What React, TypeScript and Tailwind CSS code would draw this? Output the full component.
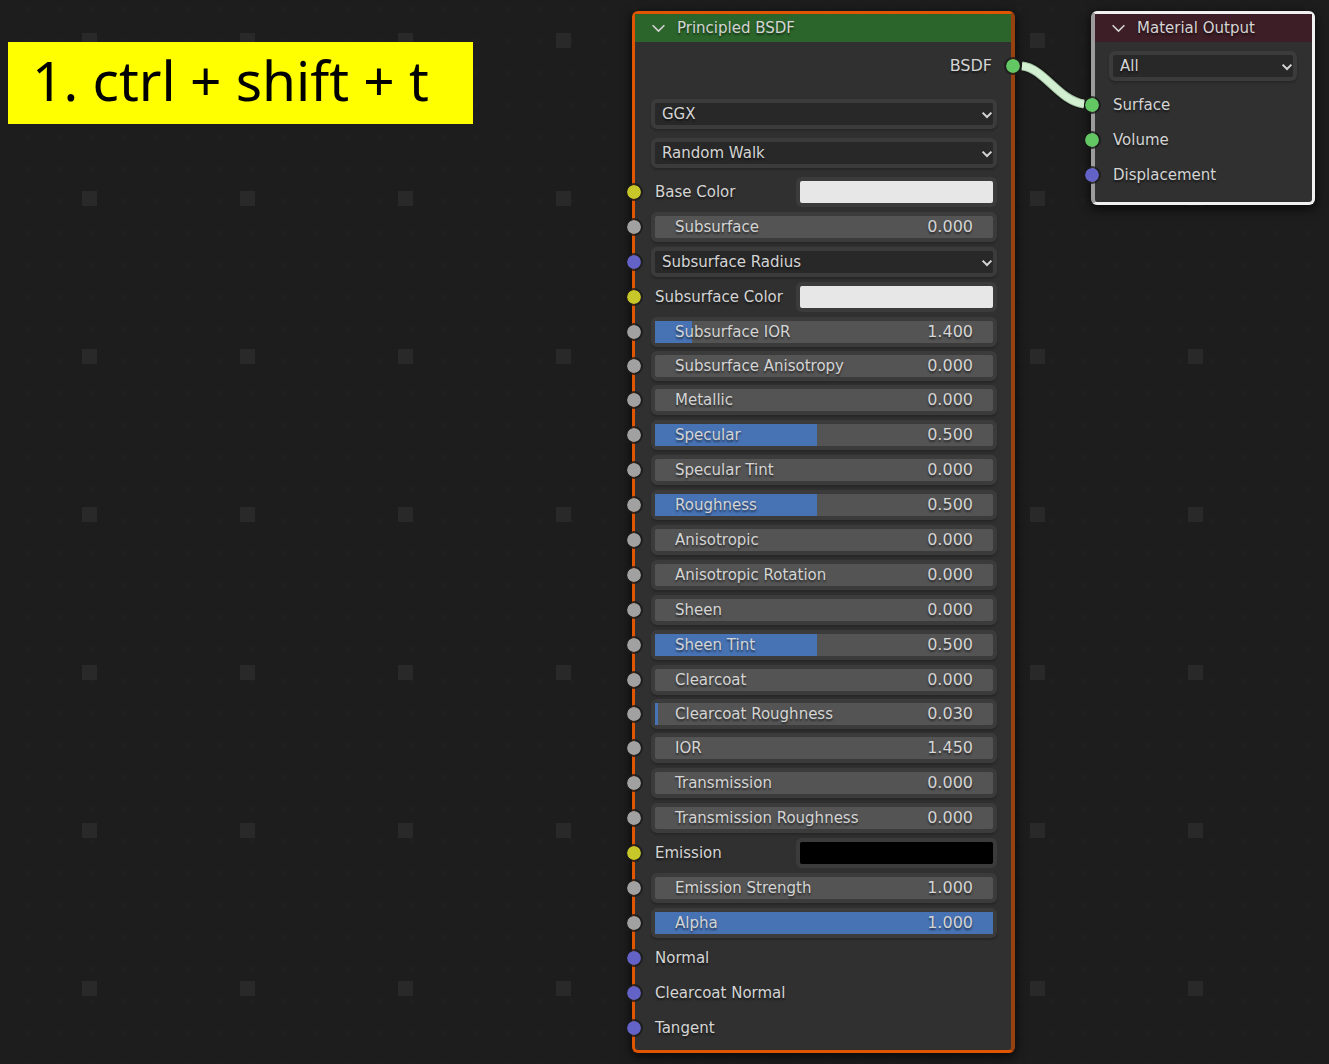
import { useState, type ReactNode } from "react";

type SocketKind = "color" | "value" | "vector" | "shader";

const socketColors: Record<SocketKind, string> = {
  color: "bg-[#c7c729]",
  value: "bg-[#a1a1a1]",
  vector: "bg-[#6363c7]",
  shader: "bg-[#63c763]",
};

const socketSides = {
  left: "-left-[8px]",
  right: "-right-[9px]",
  outer: "-left-[10px]",
};

type SocketSide = keyof typeof socketSides;

function Socket({ kind, side = "left" }: { kind: SocketKind; side?: SocketSide }) {
  return (
    <span
      className={`absolute top-1/2 size-[14px] -translate-y-1/2 rounded-full outline-2 outline-[#1a1a1a]/80 ${socketSides[side]} ${socketColors[kind]}`}
    />
  );
}

function Chevron({ className }: { className: string }) {
  return (
    <svg viewBox="0 0 14 10" className={className} fill="none" stroke="currentColor" aria-hidden="true">
      <path d="M1.5 2 7 7.5 12.5 2" />
    </svg>
  );
}

function NodeHeader({ title, className }: { title: string; className: string }) {
  return (
    <header className={`flex h-7 items-center gap-[11px] px-4 ${className}`}>
      <button type="button" aria-label={`Collapse ${title}`} className="flex">
        <Chevron className="h-[11px] w-[15px] stroke-[1.5]" />
      </button>
      <h2>{title}</h2>
    </header>
  );
}

function Row({
  kind,
  side,
  tight = false,
  children,
}: {
  kind: SocketKind;
  side?: SocketSide;
  tight?: boolean;
  children: ReactNode;
}) {
  return (
    <div className={`relative flex items-center pl-4 pr-[14px] ${tight ? "h-[33px]" : "h-[35px]"}`}>
      <Socket kind={kind} side={side} />
      {children}
    </div>
  );
}

function Dropdown({ label, options }: { label: string; options: string[] }) {
  return (
    <div className="relative h-[30px] w-full">
      <select
        aria-label={label}
        className="size-full appearance-none rounded-md border-4 border-[#3b3b3b] bg-[#282828] pl-[7px] pr-6 shadow-[0_2px_2px_#0003] [text-shadow:inherit]"
      >
        {options.map((o) => (
          <option key={o}>{o}</option>
        ))}
      </select>
      <Chevron className="pointer-events-none absolute right-1 top-3 h-[8px] w-[12px] stroke-[2.5]" />
    </div>
  );
}

function Slider({ label, value, fill, max = 1 }: { label: string; value: number; fill: number; max?: number }) {
  const [current, setCurrent] = useState(value);
  const width = current === value ? fill : (current / max) * 100;
  return (
    <label className="relative flex h-[30px] w-full items-center justify-between rounded-md border-4 border-[#3b3b3b] bg-[#545454] px-5 shadow-[0_2px_2px_#0003]">
      <span className="absolute inset-y-0 left-0 bg-[#4772b3]" style={{ width: `${width}%` }} />
      <span className="relative">{label}</span>
      <span className="relative text-base leading-5">{current.toFixed(3)}</span>
      <input
        type="range"
        min={0}
        max={max}
        step={0.001}
        value={current}
        onChange={(e) => setCurrent(Number(e.target.value))}
        className="absolute inset-0 size-full cursor-ew-resize opacity-0"
      />
    </label>
  );
}

function ColorField({ label, value }: { label: string; value: string }) {
  return (
    <label className="flex w-full items-center justify-between pl-1">
      <span>{label}</span>
      <input
        type="color"
        defaultValue={value}
        className="h-[30px] w-[201px] appearance-none rounded-md border-4 border-[#3b3b3b] bg-[#3b3b3b] p-0 [&::-webkit-color-swatch-wrapper]:p-0 [&::-webkit-color-swatch]:rounded-none [&::-webkit-color-swatch]:border-0"
      />
    </label>
  );
}

type Input =
  | { type: "slider"; label: string; value: number; fill: number; max?: number; tight?: boolean }
  | { type: "color"; label: string; value: string }
  | { type: "menu"; label: string }
  | { type: "plain"; label: string };

const inputs: Input[] = [
  { type: "color", label: "Base Color", value: "#e7e7e7" },
  { type: "slider", label: "Subsurface", value: 0, fill: 0 },
  { type: "menu", label: "Subsurface Radius" },
  { type: "color", label: "Subsurface Color", value: "#e7e7e7" },
  { type: "slider", label: "Subsurface IOR", value: 1.4, fill: 11, max: 3.8 },
  { type: "slider", label: "Subsurface Anisotropy", value: 0, fill: 0, tight: true },
  { type: "slider", label: "Metallic", value: 0, fill: 0 },
  { type: "slider", label: "Specular", value: 0.5, fill: 48 },
  { type: "slider", label: "Specular Tint", value: 0, fill: 0 },
  { type: "slider", label: "Roughness", value: 0.5, fill: 48 },
  { type: "slider", label: "Anisotropic", value: 0, fill: 0 },
  { type: "slider", label: "Anisotropic Rotation", value: 0, fill: 0 },
  { type: "slider", label: "Sheen", value: 0, fill: 0 },
  { type: "slider", label: "Sheen Tint", value: 0.5, fill: 48 },
  { type: "slider", label: "Clearcoat", value: 0, fill: 0 },
  { type: "slider", label: "Clearcoat Roughness", value: 0.03, fill: 1, tight: true },
  { type: "slider", label: "IOR", value: 1.45, fill: 0, max: 1000 },
  { type: "slider", label: "Transmission", value: 0, fill: 0 },
  { type: "slider", label: "Transmission Roughness", value: 0, fill: 0 },
  { type: "color", label: "Emission", value: "#000000" },
  { type: "slider", label: "Emission Strength", value: 1, fill: 0, max: 1000 },
  { type: "slider", label: "Alpha", value: 1, fill: 100 },
  { type: "plain", label: "Normal" },
  { type: "plain", label: "Clearcoat Normal" },
  { type: "plain", label: "Tangent" },
];

function InputRow({ input }: { input: Input }) {
  switch (input.type) {
    case "slider":
      return (
        <Row kind="value" tight={input.tight}>
          <Slider label={input.label} value={input.value} fill={input.fill} max={input.max} />
        </Row>
      );
    case "color":
      return (
        <Row kind="color">
          <ColorField label={input.label} value={input.value} />
        </Row>
      );
    case "menu":
      return (
        <Row kind="vector">
          <Dropdown label={input.label} options={[input.label]} />
        </Row>
      );
    default:
      return (
        <Row kind="vector">
          <span className="pl-1">{input.label}</span>
        </Row>
      );
  }
}

function PrincipledNode() {
  return (
    <section className="absolute left-[632px] top-[11px] w-[383px] rounded-md border-[3px] border-r-4 border-[#e05500] border-r-[#964110] bg-[#303030] pb-[5px] shadow-[0_3px_12px_#000c]">
      <NodeHeader title="Principled BSDF" className="bg-[#2b652b]" />
      <div className="pt-[6px]">
        <div className="relative flex h-[35px] items-center justify-end px-[19px]">
          <span className="text-base leading-5">BSDF</span>
          <Socket kind="shader" side="right" />
        </div>
      </div>
      <div className="flex flex-col gap-[9px] pb-[6px] pl-4 pr-[14px] pt-4">
        <Dropdown label="Distribution" options={["GGX", "Multiscatter GGX"]} />
        <Dropdown label="Subsurface Method" options={["Random Walk", "Christensen-Burley"]} />
      </div>
      {inputs.map((input) => (
        <InputRow key={input.label} input={input} />
      ))}
    </section>
  );
}

function OutputNode() {
  return (
    <section className="absolute left-[1091px] top-[11px] w-[224px] rounded-md border-[3px] border-l-4 border-[#f0f0f0] border-l-[#9c9c9c] bg-[#303030] pb-[10px] shadow-[0_3px_12px_#000c]">
      <NodeHeader title="Material Output" className="bg-[#3d1d26]" />
      <div className="pb-[6px] pl-[14px] pr-[15px] pt-[9px]">
        <Dropdown label="Target" options={["All", "Eevee", "Cycles"]} />
      </div>
      <Row kind="shader" side="outer">
        <span className="pl-[2px]">Surface</span>
      </Row>
      <Row kind="shader" side="outer">
        <span className="pl-[2px]">Volume</span>
      </Row>
      <Row kind="vector" side="outer">
        <span className="pl-[2px]">Displacement</span>
      </Row>
    </section>
  );
}

export default function App() {
  return (
    <main className="relative min-h-screen overflow-hidden bg-[#1d1d1d] bg-[conic-gradient(from_90deg_at_143px_143px,#292929_25%,transparent_0),conic-gradient(from_90deg_at_27px_27px,#1f1f1f_25%,transparent_0)] bg-[length:158px_158px,32px_32px] bg-[position:-61px_-110px,-2px_-21px] font-['DejaVu_Sans',sans-serif] text-[15px] leading-5 text-[#d4d4d4] [text-shadow:0_2px_2px_#0008]">
      <p className="absolute left-2 top-[42px] flex h-[82px] w-[465px] items-center whitespace-pre bg-[#ffff00] px-6 pb-2 font-['Noto_Sans',sans-serif] text-[55px] leading-none text-black [text-shadow:none]">
        1. ctrl + shift + t
      </p>
      <PrincipledNode />
      <OutputNode />
      <svg
        viewBox="0 0 80 60"
        className="pointer-events-none absolute left-[1013px] top-[56px] h-[60px] w-[80px]"
        fill="none"
        aria-hidden="true"
      >
        <path d="M9 10C31 12 46 45 71 48" stroke="#161616" strokeWidth="12" />
        <path d="M9 10C31 12 46 45 71 48" stroke="#a5c4a5" strokeWidth="9" />
        <path d="M9 10C31 12 46 45 71 48" stroke="#d2efd2" strokeWidth="7" />
      </svg>
    </main>
  );
}
